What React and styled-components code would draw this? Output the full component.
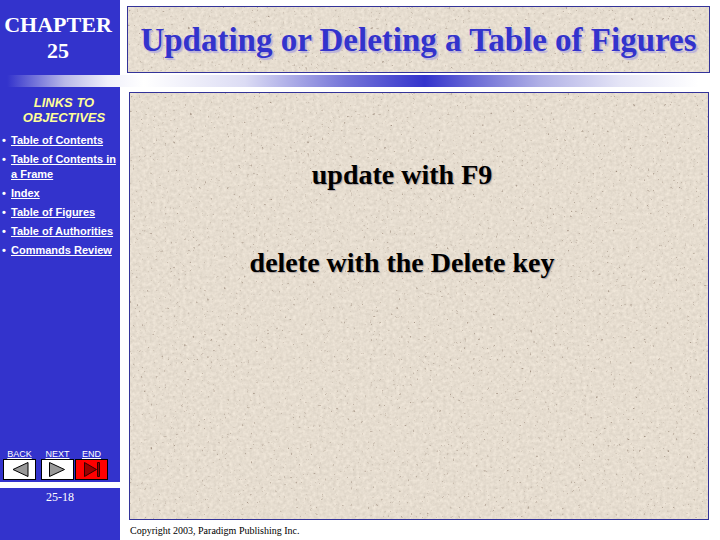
import React from 'react';
import styled, { createGlobalStyle } from 'styled-components';

const links = [
  'Table of Contents',
  'Table of Contents in a Frame',
  'Index',
  'Table of Figures',
  'Table of Authorities',
  'Commands Review',
];

const GlobalStyle = createGlobalStyle`
  * {
    box-sizing: border-box;
  }

  body {
    margin: 0;
    background: #ffffff;
    font-family: 'Liberation Serif', serif;
  }
`;

const Slide = styled.div`
  display: flex;
  flex-direction: column;
  min-height: 100vh;
`;

const Row = styled.div`
  display: grid;
  grid-template-columns: 120px minmax(0, 1fr);
  flex: ${(props) => (props.$grow ? 1 : 'none')};
`;

const Chapter = styled.div`
  padding: 12px 4px 11px 0;
  background: #3333cc;
  color: #ffffff;
  font-size: 22px;
  font-weight: bold;
  line-height: 26px;
  text-align: center;
`;

const Panel = styled.div`
  position: relative;
  border: 1px solid #333399;
  background: #e6dccf;
`;

const TitlePanel = styled(Panel)`
  display: flex;
  align-items: center;
  justify-content: center;
  margin: 6px 10px 2px 7px;
`;

const Title = styled.h1`
  position: relative;
  margin: 0;
  color: #3333cc;
  font-size: 33px;
  line-height: 40px;
  text-shadow: 2px 2px 1px #b9b0d8;
  white-space: nowrap;
`;

const Stripe = styled.div`
  height: 12px;
  background: linear-gradient(
    to right,
    #3333cc 1%,
    #b8b8e8 9%,
    #f0f0fb 15%,
    #ffffff 20%,
    #dcdcf4 34%,
    #7474d8 48%,
    #3333cc 59%,
    #6c6cd6 66%,
    #b0b0e6 75%,
    #e4e4f6 86%,
    #ffffff 97%
  );
`;

const Sidebar = styled.aside`
  display: flex;
  flex-direction: column;
  background: #3333cc;
  color: #ffffff;
`;

const LinksTitle = styled.h2`
  margin: 8px 0 8px;
  padding-left: 8px;
  color: #ffff99;
  font: italic bold 13px/15px 'Liberation Sans', sans-serif;
  text-align: center;
`;

const LinkList = styled.ul`
  display: flex;
  flex-direction: column;
  gap: 4px;
  margin: 0;
  padding: 0 4px 0 11px;
  list-style: none;
  font: bold 11px/15px 'Liberation Sans', sans-serif;

  li::before {
    content: '•';
    float: left;
    margin-left: -9px;
  }

  a {
    color: #ffffff;
  }
`;

const Nav = styled.nav`
  display: flex;
  gap: 1px;
  margin-top: auto;
  padding-left: 3px;
`;

const NavItem = styled.div`
  display: flex;
  flex-direction: column;
  align-items: center;
  margin-right: ${(props) => (props.$spaced ? '4px' : 0)};
  font: 9px/9px 'Liberation Sans', sans-serif;

  a {
    color: #ffffff;
  }
`;

const NavButton = styled.button`
  width: 33px;
  height: 21px;
  padding: 0;
  border: 1px solid #000000;
  background: ${(props) => props.$fill};

  svg {
    display: block;
  }
`;

const SlideNumber = styled.div`
  height: 52px;
  font-size: 12px;
  line-height: 18px;
  text-align: center;
`;

const Divider = styled.div`
  height: 6px;
  margin-top: 2px;
  background: #ffffff;
`;

const Main = styled.main`
  display: flex;
  flex-direction: column;
  padding: 5px 11px 0 9px;
`;

const ContentPanel = styled(Panel)`
  display: flex;
  flex: 1;
  flex-direction: column;
  align-items: center;
  gap: 56px;
  padding: 66px 34px 0 0;
`;

const Line = styled.p`
  position: relative;
  margin: 0;
  color: #000000;
  font-size: 28px;
  font-weight: bold;
  line-height: 32px;
  text-shadow: 1px 1px 1px #a8a0a0;
`;

const Copyright = styled.footer`
  height: 20px;
  padding: 2px 0 0 1px;
  font-size: 10px;
  line-height: 18px;
`;

const Grain = styled.svg`
  position: absolute;
  inset: 0;
  width: 100%;
  height: 100%;
`;

// speckled paper: soft grain first, then sparse darker flecks over it
const Paper = ({ id }) => (
  <Grain aria-hidden="true">
    <filter
      id={id}
      x="0"
      y="0"
      width="100%"
      height="100%"
      colorInterpolationFilters="sRGB"
    >
      <feTurbulence type="fractalNoise" baseFrequency="0.3" numOctaves="2" seed="8" />
      <feColorMatrix
        values="0.12 0 0 0 0.842
                0.12 0 0 0 0.806
                0.12 0 0 0 0.754
                0 0 0 0 1"
        result="grain"
      />
      <feTurbulence type="fractalNoise" baseFrequency="0.35" numOctaves="2" seed="3" />
      <feColorMatrix
        values="0 0 0 0 0.6
                0 0 0 0 0.53
                0 0 0 0 0.47
                4 0 0 0 -2.8"
        result="flecks"
      />
      <feMerge>
        <feMergeNode in="grain" />
        <feMergeNode in="flecks" />
      </feMerge>
    </filter>
    <rect width="100%" height="100%" filter={`url(#${id})`} />
  </Grain>
);

const BackIcon = () => (
  <svg width="31" height="19" viewBox="0 0 31 19">
    <path d="M24 2.5V16.5L9 9.5Z" fill="#999999" stroke="#000000" />
  </svg>
);

const NextIcon = () => (
  <svg width="31" height="19" viewBox="0 0 31 19">
    <path d="M7.5 2.5V16.5L22.5 9.5Z" fill="#999999" stroke="#000000" />
  </svg>
);

const EndIcon = () => (
  <svg width="31" height="19" viewBox="0 0 31 19">
    <path d="M8.5 2.5V16.5L20.5 9.5Z" fill="#990000" stroke="#330000" />
    <path d="M21.5 2.5H23.5V16.5H21.5Z" fill="#990000" stroke="#330000" />
  </svg>
);

export default () => {
  return (
    <Slide>
      <GlobalStyle />
      <Row>
        <Chapter>
          CHAPTER
          <br />
          25
        </Chapter>
        <TitlePanel>
          <Paper id="titlePaper" />
          <Title>Updating or Deleting a Table of Figures</Title>
        </TitlePanel>
      </Row>

      <Stripe />

      <Row $grow>
        <Sidebar>
          <LinksTitle>
            LINKS TO
            <br />
            OBJECTIVES
          </LinksTitle>
          <LinkList>
            {links.map((link) => (
              <li key={link}>
                <a href="#objectives">{link}</a>
              </li>
            ))}
          </LinkList>

          <Nav>
            <NavItem $spaced>
              <a href="#back">BACK</a>
              <NavButton $fill="#ffffff" aria-label="Back">
                <BackIcon />
              </NavButton>
            </NavItem>
            <NavItem>
              <a href="#next">NEXT</a>
              <NavButton $fill="#ffffff" aria-label="Next">
                <NextIcon />
              </NavButton>
            </NavItem>
            <NavItem>
              <a href="#end">END</a>
              <NavButton $fill="#ff0000" aria-label="End">
                <EndIcon />
              </NavButton>
            </NavItem>
          </Nav>
          <Divider />
          <SlideNumber>25-18</SlideNumber>
        </Sidebar>

        <Main>
          <ContentPanel>
            <Paper id="contentPaper" />
            <Line>update with F9</Line>
            <Line>delete with the Delete key</Line>
          </ContentPanel>
          <Copyright>Copyright 2003, Paradigm Publishing Inc.</Copyright>
        </Main>
      </Row>
    </Slide>
  );
};
